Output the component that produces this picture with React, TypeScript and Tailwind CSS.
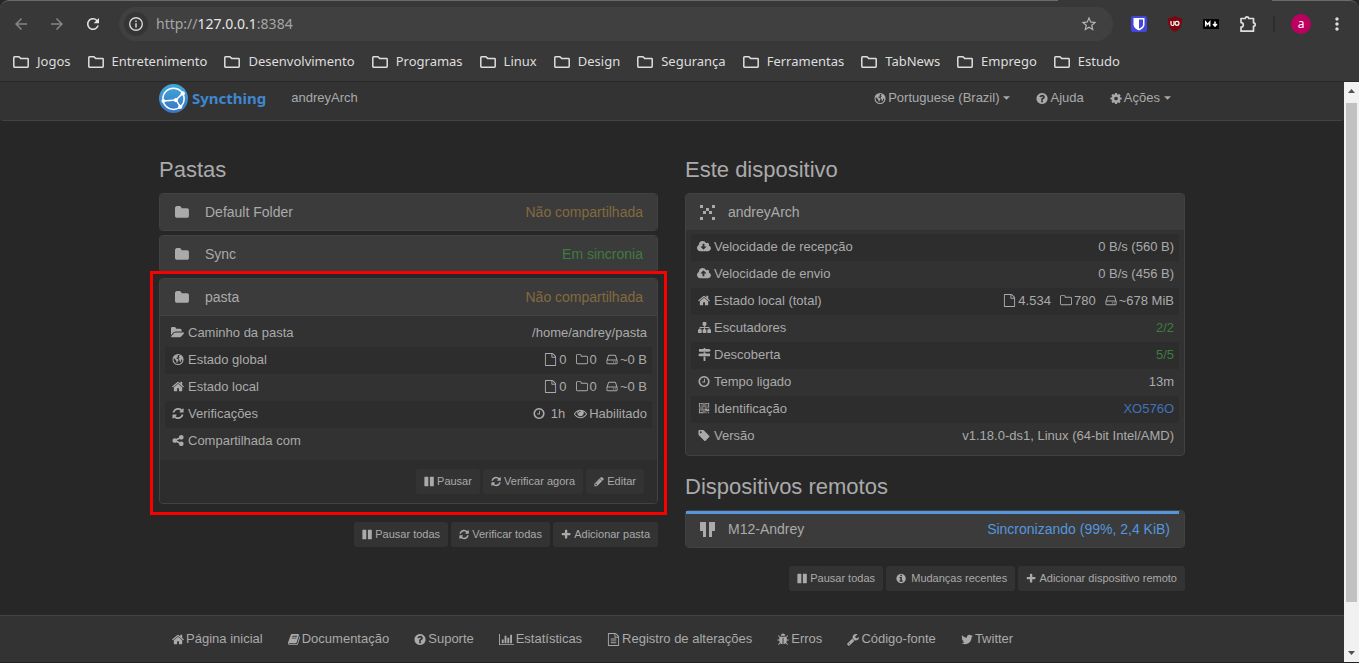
import React from "react";
import { MdArrowBack, MdArrowForward, MdRefresh, MdStarBorder, MdMoreVert } from "react-icons/md";

const DISC =
  "m384 0q0 209-103 385.5t-279.5 279.5-385.5 103-385.5-103-279.5-279.5-103-385.5 103-385.5 279.5-279.5 385.5-103 385.5 103 279.5 279.5 103 385.5z";
const CLOUD =
  "M1856 1152q0 159-112.500 271.500t-271.500 112.500h-1088q-185 0-316.500-131.500t-131.500-316.500q0-130 70-240t188-165q-2-30-2-43 0-212 150-362t362-150q156 0 285.500 87t188.500 231q71-62 166-62 106 0 181 75t75 181q0 76-41 138 130 31 213.500 135.500t83.500 238.500z";
const PAGE =
  "M1596 380q28 28 48 76t20 88v1152q0 40-28 68t-68 28h-1344q-40 0-68-28t-28-68v-1600q0-40 28-68t68-28h896q40 0 88 20t76 48zm-444-244v376h376q-10-29-22-41l-313-313q-12-12-41-22zm384 1528v-1024h-416q-40 0-68-28t-28-68v-416h-768v1536h1280z";

const paths = {
  home: "M1472 992v480q0 26-19 45t-45 19h-384v-384h-256v384h-384q-26 0-45-19t-19-45v-480q0-1 .5-3t.5-3l575-474 575 474q1 2 1 6zm223-69l-62 74q-8 9-21 11h-3q-13 0-21-7l-692-577-692 577q-12 8-24 7-13-2-21-11l-62-74q-8-10-7-23.5t11-21.5l719-599q32-26 76-26t76 26l244 204v-195q0-14 9-23t23-9h192q14 0 23 9t9 23v408l219 182q10 8 11 21.5t-7 23.5z",
  refresh:
    "M1639 1056q0 5-1 7-64 268-268 434.5t-478 166.5q-146 0-282.5-55t-243.5-157l-129 129q-19 19-45 19t-45-19-19-45v-448q0-26 19-45t45-19h448q26 0 45 19t19 45-19 45l-137 137q71 66 161 102t187 36q134 0 250-65t186-179q11-17 53-117 8-23 30-23h192q13 0 22.5 9.5t9.5 22.5zm25-800v448q0 26-19 45t-45 19h-448q-26 0-45-19t-19-45 19-45l138-138q-148-137-349-137-134 0-250 65t-186 179q-11 17-53 117-8 23-30 23h-199q-13 0-22.5-9.5t-9.5-22.5v-7q65-268 270-434.5t480-166.5q146 0 284 55.5t245 156.5l130-129q19-19 45-19t45 19 19 45z",
  folderOpen:
    "M1815 952q0 31-31 66l-336 396q-43 51-120.5 86.5t-143.5 35.5h-1088q-34 0-60.5-13t-26.5-43q0-31 31-66l336-396q43-51 120.5-86.5t143.5-35.5h1088q34 0 60.5 13t26.5 43zm-343-344v160h-832q-94 0-197 47.5t-164 119.5l-337 396-5 6q0-4-.5-12.5t-.5-12.5v-960q0-92 66-158t158-66h320q92 0 158 66t66 158v32h544q92 0 158 66t66 158z",
  folder:
    "M1728 608v704q0 92-66 158t-158 66h-1216q-92 0-158-66t-66-158v-960q0-92 66-158t158-66h320q92 0 158 66t66 158v32h672q92 0 158 66t66 158z",
  folderO:
    "M1600 1312v-704q0-40-28-68t-68-28h-704q-40 0-68-28t-28-68v-64q0-40-28-68t-68-28h-320q-40 0-68 28t-28 68v960q0 40 28 68t68 28h1216q40 0 68-28t28-68zm128-704v704q0 92-66 158t-158 66h-1216q-92 0-158-66t-66-158v-960q0-92 66-158t158-66h320q92 0 158 66t66 158v32h672q92 0 158 66t66 158z",
  fileO: PAGE,
  fileText:
    PAGE +
    "M512 800q0-14 9-23t23-9h704q14 0 23 9t9 23v64q0 14-9 23t-23 9h-704q-14 0-23-9t-9-23v-64zm736 224q14 0 23 9t9 23v64q0 14-9 23t-23 9h-704q-14 0-23-9t-9-23v-64q0-14 9-23t23-9h704zm0 256q14 0 23 9t9 23v64q0 14-9 23t-23 9h-704q-14 0-23-9t-9-23v-64q0-14 9-23t23-9h704z",
  clock:
    "M1024 544v448q0 14-9 23t-23 9h-320q-14 0-23-9t-9-23v-64q0-14 9-23t23-9h224v-352q0-14 9-23t23-9h64q14 0 23 9t9 23zm416 352q0-148-73-273t-198-198-273-73-273 73-198 198-73 273 73 273 198 198 273 73 273-73 198-198 73-273zm224 0q0 209-103 385.5t-279.5 279.5-385.5 103-385.5-103-279.5-279.5-103-385.5 103-385.5 279.5-279.5 385.5-103 385.5 103 279.5 279.5 103 385.5z",
  question:
    "M1024 1376v-192q0-14-9-23t-23-9h-192q-14 0-23 9t-9 23v192q0 14 9 23t23 9h192q14 0 23-9t9-23zm256-672q0-88-55.5-163t-138.5-116-170-41q-243 0-371 213-15 24 8 42l132 100q7 6 19 6 16 0 25-12 53-68 86-92 34-24 86-24 48 0 85.5 26t37.5 59q0 38-20 61t-68 45q-63 28-115.5 86.5t-52.5 125.5v36q0 14 9 23t23 9h192q14 0 23-9t9-23q0-19 21.5-49.5t54.5-49.5q32-18 49-28.5t46-35 44.5-48 28-60.5 12.5-81zm0 192" +
    DISC,
  info:
    "M1152 1376v-160q0-14-9-23t-23-9h-96v-512q0-14-9-23t-23-9h-320q-14 0-23 9t-9 23v160q0 14 9 23t23 9h96v320h-96q-14 0-23 9t-9 23v160q0 14 9 23t23 9h448q14 0 23-9t9-23zm-128-896v-160q0-14-9-23t-23-9h-192q-14 0-23 9t-9 23v160q0 14 9 23t23 9h192q14 0 23-9t9-23zm256 416" +
    DISC,
  plus: "M1600 736v192q0 40-28 68t-68 28h-416v416q0 40-28 68t-68 28h-192q-40 0-68-28t-28-68v-416h-416q-40 0-68-28t-28-68v-192q0-40 28-68t68-28h416v-416q0-40 28-68t68-28h192q40 0 68 28t28 68v416h416q40 0 68 28t28 68z",
  pause:
    "M1664 192v1408q0 26-19 45t-45 19h-512q-26 0-45-19t-19-45v-1408q0-26 19-45t45-19h512q26 0 45 19t19 45zm-896 0v1408q0 26-19 45t-45 19h-512q-26 0-45-19t-19-45v-1408q0-26 19-45t45-19h512q26 0 45 19t19 45z",
  pencil:
    "M491 1536l91-91-235-235-91 91v107h128v128h107zm523-928q0-22-22-22-10 0-17 7l-542 542q-7 7-7 17 0 22 22 22 10 0 17-7l542-542q7-7 7-17zm-54-192l416 416-832 832h-416v-416zm683 96q0 53-37 90l-166 166-416-416 166-165q36-38 90-38 53 0 91 38l235 234q37 39 37 91z",
  cog: "M1152 896q0-106-75-181t-181-75-181 75-75 181 75 181 181 75 181-75 75-181zm512-109v222q0 12-8 23t-20 13l-185 28q-19 54-39 91 35 50 107 138 10 12 10 25t-9 23q-27 37-99 108t-94 71q-12 0-26-9l-138-108q-44 23-91 38-16 136-29 186-7 28-36 28h-222q-14 0-24.5-8.5t-11.5-21.5l-28-184q-49-16-90-37l-141 107q-10 9-25 9-14 0-25-11-126-114-165-168-7-10-7-23 0-12 8-23 15-21 51-66.5t54-70.5q-27-50-41-99l-183-27q-13-2-21-12.5t-8-23.5v-222q0-12 8-23t19-13l186-28q14-46 39-92-40-57-107-138-10-12-10-24 0-10 9-23 26-36 98.5-107.5t94.5-71.5q13 0 26 10l138 107q44-23 91-38 16-136 29-186 7-28 36-28h222q14 0 24.5 8.5t11.5 21.5l28 184q49 16 90 37l142-107q9-9 24-9 13 0 25 10 129 119 165 170 7 8 7 22 0 12-8 23-15 21-51 66.500t-54 70.500q26 50 41 98l183 28q13 2 21 12.5t8 23.500z",
  tag: "M576 448q0-53-37.5-90.5t-90.5-37.5-90.5 37.5-37.5 90.5 37.5 90.5 90.5 37.5 90.5-37.5 37.5-90.5zm1067 576q0 53-37 90l-491 492q-39 37-91 37-53 0-90-37l-715-716q-38-37-64.5-101t-26.5-117v-416q0-52 38-90t90-38h416q53 0 117 26.5t102 64.5l715 714q37 39 37 91z",
  share:
    "M1344 1024q133 0 226.5 93.5t93.5 226.5-93.5 226.5-226.5 93.5-226.5-93.5-93.5-226.5q0-12 2-34l-360-180q-92 86-218 86-133 0-226.5-93.5t-93.5-226.5 93.5-226.5 226.5-93.5q126 0 218 86l360-180q-2-22-2-34 0-133 93.5-226.5t226.5-93.5 226.5 93.5 93.5 226.5-93.5 226.5-226.5 93.5q-126 0-218-86l-360 180q2 22 2 34t-2 34l360 180q92-86 218-86z",
  eye: "M1664 960q-152-236-381-353 61 104 61 225 0 185-131.5 316.5t-316.5 131.5-316.5-131.5-131.5-316.5q0-121 61-225-229 117-381 353 133 205 333.5 326.5t434.5 121.5 434.5-121.5 333.5-326.5zm-720-384q0-20-14-34t-34-14q-125 0-214.5 89.5t-89.5 214.5q0 20 14 34t34 14 34-14 14-34q0-86 61-147t147-61q20 0 34-14t14-34zm848 384q0 34-20 69-140 230-376.5 368.5t-499.5 138.5-499.5-139-376.5-368q-20-35-20-69t20-69q140-229 376.5-368t499.5-139 499.5 139 376.500 368q20 35 20 69z",
  hdd: "M1168 1216q0 33-23.5 56.5t-56.5 23.5-56.5-23.5-23.5-56.5 23.5-56.5 56.5-23.5 56.5 23.5 23.5 56.5zm256 0q0 33-23.5 56.5t-56.5 23.5-56.5-23.5-23.5-56.5 23.5-56.5 56.5-23.5 56.5 23.5 23.5 56.5zm112 160v-320q0-13-9.5-22.5t-22.5-9.5h-1216q-13 0-22.5 9.5t-9.5 22.5v320q0 13 9.5 22.5t22.5 9.5h1216q13 0 22.5-9.5t9.5-22.5zm-1230-480h1180l-157-482q-4-13-16-21.5t-26-8.5h-782q-14 0-26 8.5t-16 21.5zm1358 160v320q0 66-47 113t-113 47h-1216q-66 0-113-47t-47-113v-320q0-25 16-75l197-606q17-53 63-86t101-33h782q55 0 101 33t63 86l197 606q16 50 16 75z",
  sitemap:
    "M1792 1248v320q0 40-28 68t-68 28h-320q-40 0-68-28t-28-68v-320q0-40 28-68t68-28h96v-192h-512v192h96q40 0 68 28t28 68v320q0 40-28 68t-68 28h-320q-40 0-68-28t-28-68v-320q0-40 28-68t68-28h96v-192h-512v192h96q40 0 68 28t28 68v320q0 40-28 68t-68 28h-320q-40 0-68-28t-28-68v-320q0-40 28-68t68-28h96v-192q0-52 38-90t90-38h512v-192h-96q-40 0-68-28t-28-68v-320q0-40 28-68t68-28h320q40 0 68 28t28 68v320q0 40-28 68t-68 28h-96v192h512q52 0 90 38t38 90v192h96q40 0 68 28t28 68z",
  signs:
    "M1745 297q10 10 10 23t-10 23l-141 141q-28 28-68 28h-1344q-26 0-45-19t-19-45v-256q0-26 19-45t45-19h576v-64q0-26 19-45t45-19h128q26 0 45 19t19 45v64h512q40 0 68 28zm-977 919h256v512q0 26-19 45t-45 19h-128q-26 0-45-19t-19-45v-512zm832-448q26 0 45 19t19 45v256q0 26-19 45t-45 19h-1344q-40 0-68-28l-141-141q-10-10-10-23t10-23l141-141q28-28 68-28h512v-192h256v192h576z",
  download:
    CLOUD +
    "M1216 928q0-14-9-23t-23-9h-224v-352q0-13-9.5-22.5t-22.5-9.5h-192q-13 0-22.5 9.5t-9.5 22.5v352h-224q-13 0-22.5 9.5t-9.5 22.5q0 14 9 23l352 352q9 9 23 9t23-9l351-351q10-12 10-24z",
  upload:
    CLOUD +
    "M1216 864q0-14-9-23l-352-352q-9-9-23-9t-23 9l-351 351q-10 12-10 24 0 14 9 23t23 9h224v352q0 13 9.5 22.5t22.5 9.5h192q13 0 22.5-9.5t9.5-22.5v-352h224q13 0 22.5-9.5t9.5-22.5z",
  twitter:
    "M1684 408q-67 98-162 167 1 14 1 42 0 130-38 259.5t-115.5 248.5-184.5 210.5-258 146-323 54.5q-271 0-496-145 35 4 78 4 225 0 401-138-105-2-188-64.5t-114-159.5q33 5 61 5 43 0 85-11-112-23-185.5-111.5t-73.5-205.5v-4q68 38 146 41-66-44-105-115t-39-154q0-88 44-163 121 149 294.5 238.5t371.5 99.5q-8-38-8-74 0-134 94.5-228.5t228.5-94.5q140 0 236 102 109-21 205-78-37 115-142 178 93-10 186-50z",
  bug: "M1696 960q0 26-19 45t-45 19h-224q0 171-67 290l208 209q19 19 19 45t-19 45q-18 19-45 19t-45-19l-198-197q-5 5-15 13t-42 28.5-65 36.5-82 29-97 13v-896h-128v896q-51 0-101.5-13.5t-87-33-66-39-43.5-32.5l-15-14-183 207q-20 21-48 21-24 0-43-16-19-18-20.5-44.5t15.5-46.5l202-227q-58-114-58-274h-224q-26 0-45-19t-19-45 19-45 45-19h224v-294l-173-173q-19-19-19-45t19-45 45-19 45 19l173 173h844l173-173q19-19 45-19t45 19 19 45-19 45l-173 173v294h224q26 0 45 19t19 45zm-480-576h-640q0-133 93.5-226.5t226.5-93.5 226.5 93.5 93.5 226.5z",
  wrench:
    "M448 1472q0-26-19-45t-45-19-45 19-19 45 19 45 45 19 45-19 19-45zm644-420l-682 682q-37 37-90 37-52 0-91-37l-106-108q-38-36-38-90 0-53 38-91l681-681q39 98 114.5 173.5t173.5 114.5zm634-435q0 39-23 106-47 134-164.5 217.5t-258.5 83.5q-185 0-316.5-131.5t-131.5-316.5 131.5-316.5 316.5-131.5q58 0 121.5 16.5t107.5 46.5q16 11 16 28t-16 28l-293 169v224l193 107q5-3 79-48.5t135.5-81 70.5-35.5q15 0 23.5 10t8.5 25z",
  chart:
    "M640 896v512h-256v-512h256zm384-512v1024h-256v-1024h256zm1024 1152v128h-2048v-1536h128v1408h1920zm-640-896v768h-256v-768h256zm384-384v1152h-256v-1152h256z",
  book: "M1703 478q40 57 18 129l-275 906q-19 64-76.5 107.5t-122.5 43.5h-923q-77 0-148.5-53.5t-99.5-131.5q-24-67-2-127 0-4 3-27t4-37q1-8-3-21.5t-3-19.5q2-11 8-21t16.5-23.5 16.5-23.5q23-38 45-91.5t30-91.5q3-10 .5-30t-.5-28q3-11 17-28t17-23q21-36 42-92t25-90q1-9-2.5-32t.5-28q4-13 22-30.5t22-22.5q19-26 42.5-84.5t27.5-96.5q1-8-3-25.5t-2-26.5q2-8 9-18t18-23 17-21q8-12 16.5-30.5t15-35 16-36 19.5-32 26.5-23.5 36-11.5 47.5 5.5l-1 3q38-9 51-9h761q74 0 114 56t18 130l-274 906q-36 119-71.5 153.5t-128.5 34.5h-869q-27 0-38 15-11 16-1 43 24 70 144 70h923q29 0 56-15.5t35-41.5l300-987q7-22 5-57 38 15 59 43zm-1064 2q-4 13 2 22.5t20 9.5h608q13 0 25.5-9.5t16.5-22.5l21-64q4-13-2-22.5t-20-9.5h-608q-13 0-25.5 9.5t-16.5 22.5zm-83 256q-4 13 2 22.5t20 9.5h608q13 0 25.5-9.5t16.5-22.5l21-64q4-13-2-22.5t-20-9.5h-608q-13 0-25.5 9.5t-16.5 22.5z",
  qr: "M576 1152v128h-128v-128h128zm0-768v128h-128v-128h128zm768 0v128h-128v-128h128zm-1024 1023h384v-383h-384v383zm0-767h384v-384h-384v384zm768 0h384v-384h-384v384zm-256 256v640h-640v-640h640zm512 512v128h-128v-128h128zm256 0v128h-128v-128h128zm0-512v384h-384v-128h-128v384h-128v-640h384v128h128v-128h128zm-768-768v640h-640v-640h640zm768 0v640h-640v-640h640z",
  globe:
    "M420 420L760 230L900 330L810 480L900 560L800 640L690 620L640 740L760 800L900 850L960 1000L860 1160L770 1380L690 1300L660 1060L540 940L470 790L330 740L300 600zM1010 420L1180 300L1420 470L1560 720L1580 960L1480 1060L1400 880L1280 900L1330 1080L1240 1250L1120 1180L1110 980L980 900L990 720L1130 640L1030 560z",
};

type IconName = keyof typeof paths;

const boxes: Partial<Record<IconName, string>> = {
  download: "-64 0 1920 1792",
  upload: "-64 0 1920 1792",
  chart: "0 0 2048 1792",
  folderOpen: "0 0 1856 1792",
  sitemap: "0 0 1792 1792",
  eye: "0 0 1792 1792",
  signs: "0 0 1792 1792",
  fileText: "0 0 1792 1792",
  fileO: "0 0 1792 1792",
};

function Icon({ name, className = "h-[13px]" }: { name: IconName; className?: string }) {
  return (
    <svg viewBox={boxes[name] ?? "64 0 1664 1792"} className={"w-auto shrink-0 " + className} fill="currentColor" fillRule="evenodd" aria-hidden="true">
      {name === "globe" && <circle cx="896" cy="896" r="690" fill="none" stroke="currentColor" strokeWidth="150" />}
      <path d={paths[name]} />
    </svg>
  );
}

function BookmarkFolder() {
  return (
    <svg viewBox="0 0 16 12" className="h-3 w-4 shrink-0" fill="none" stroke="#dedede" strokeWidth="1.5" strokeLinejoin="round" aria-hidden="true">
      <path d="M.8 1.500Q.8.8 1.500.8H6L7.800 2.600H14.500Q15.200 2.600 15.200 3.300V10.500Q15.200 11.200 14.500 11.200H1.500Q.8 11.200.8 10.500Z" />
    </svg>
  );
}

const bookmarks = ["Jogos", "Entretenimento", "Desenvolvimento", "Programas", "Linux", "Design", "Segurança", "Ferramentas", "TabNews", "Emprego", "Estudo"];

function BrowserBar() {
  return (
    <header className="relative rounded-t-[9px] border-t border-[#6a6c6a] border-b border-b-[#272727] bg-[#383838] font-['Noto_Sans',sans-serif]">
      <div className="absolute -top-px right-[87px] h-px w-[214px] bg-[#383838]" />
      <div className="flex h-[46px] items-center pr-3 pl-3">
        <button aria-label="Voltar" className="mr-[18px] text-[#858585]"><MdArrowBack size={18} /></button>
        <button aria-label="Avançar" className="mr-[18px] text-[#858585]"><MdArrowForward size={18} /></button>
        <button aria-label="Recarregar" className="mr-[17px] text-[#e6e6e6]"><MdRefresh size={18} /></button>
        <div className="mr-[18px] flex h-[34px] flex-1 items-center rounded-full bg-[#404040] pr-[15px] pl-[5px]">
          <button aria-label="Informações do site" className="flex size-6 items-center justify-center rounded-full bg-[#353535]">
            <svg viewBox="0 0 16 16" className="size-4" fill="none" stroke="#d6d6d6" strokeWidth="1.400" aria-hidden="true">
              <circle cx="8" cy="8" r="6.300" />
              <path d="M8 7.200v4.300M8 4.400v1.500" strokeWidth="1.500" />
            </svg>
          </button>
          <div className="ml-2 flex-1 text-sm text-[#a6a6a6]">
            http://<span className="text-[#e6e6e6]">127.0.0.1</span>:8384
          </div>
          <button aria-label="Favoritar" className="text-[#b4b4b4]"><MdStarBorder size={18} /></button>
        </div>
        <div className="flex items-center">
          <button aria-label="Bitwarden" className="mr-5">
            <svg viewBox="0 0 16 16" className="size-4" aria-hidden="true">
              <rect width="16" height="16" rx="2" fill="#4246dc" />
              <path d="M2.500 2h11v6.500c0 3-2.700 4.700-5.500 6-2.800-1.300-5.500-3-5.500-6z" fill="#fff" />
              <path d="M8 3.600h4v5c0 1.900-1.800 3.100-4 4.200z" fill="#4246dc" />
            </svg>
          </button>
          <button aria-label="uBlock Origin" className="mr-5">
            <svg viewBox="0 0 16 16" className="size-4" aria-hidden="true">
              <path d="M8 0c2 1.500 4.500 2 7 2 0 7.500-1 10.500-7 14C2 12.500 1 9.500 1 2c2.500 0 5-.5 7-2z" fill="#7c0510" />
              <g fill="none" stroke="#fff" strokeWidth="1.200">
                <path d="M4 5v3a1.500 1.500 0 0 0 3 0V5" />
                <circle cx="10" cy="7.300" r="2" />
              </g>
            </svg>
          </button>
          <button aria-label="Markdown" className="mr-5">
            <svg viewBox="0 0 16 10" className="h-[10px] w-4" aria-hidden="true">
              <rect width="16" height="10" rx="1" fill="#000" />
              <path d="M2.700 7.500V3l2 2.400L6.700 3v4.500M12 2.500v4M10 5l2 2.200L14 5" fill="none" stroke="#fff" strokeWidth="1.500" />
            </svg>
          </button>
          <button aria-label="Extensões" className="mr-4">
            <svg viewBox="0 0 18 18" className="size-[18px]" fill="none" stroke="#dedede" strokeWidth="1.700" strokeLinejoin="round" aria-hidden="true">
              <path d="M2 3.500h4.300a1.700 1.700 0 0 1 3.400 0h4.800v4.300a1.700 1.700 0 0 1 0 3.400v5H2v-4a2.300 2.300 0 0 0 0-4.600z" />
            </svg>
          </button>
          <div className="mr-4 h-4 w-0.5 bg-[#2c2c2c]" />
          <button aria-label="Perfil" className="mr-4 flex size-5 items-center justify-center rounded-full bg-[#bd0060] text-xs text-white">a</button>
          <button aria-label="Menu" className="text-[#dedede]"><MdMoreVert size={20} /></button>
        </div>
      </div>
      <nav aria-label="Favoritos" className="flex h-[34px] items-center gap-[17px] pb-1 pl-[13px] text-[13px] text-[#dedede]">
        {bookmarks.map((b) => (
          <a key={b} href="#" className="flex items-center gap-2">
            <BookmarkFolder />
            {b}
          </a>
        ))}
      </nav>
    </header>
  );
}

function Logo() {
  return (
    <a href="#" className="flex items-center gap-1 text-[#3f87cf]">
      <svg viewBox="0 0 30 30" className="size-[29px]" aria-hidden="true">
        <defs>
          <linearGradient id="disc" x1="0" y1="0" x2="0" y2="1">
            <stop offset="0" stopColor="#3fa9dc" />
            <stop offset="1" stopColor="#3b73c0" />
          </linearGradient>
        </defs>
        <circle cx="15" cy="15" r="15" fill="url(#disc)" />
        <g fill="none" stroke="#fff" strokeWidth="1.500">
          <circle cx="15" cy="15.300" r="11" />
          <path d="M4.500 17.500L17.500 16.500L24.500 9.700M17.500 16.500L22 23.500" />
        </g>
        <g fill="#fff">
          <circle cx="4.500" cy="17.500" r="2" />
          <circle cx="17.500" cy="16.600" r="2.200" />
          <circle cx="24.600" cy="9.700" r="2.200" />
          <circle cx="22" cy="23.600" r="2.200" />
        </g>
      </svg>
      <span className="font-['Noto_Sans',sans-serif] text-[15px] leading-5 font-bold">Syncthing</span>
    </a>
  );
}

function Caret() {
  return (
    <svg viewBox="0 0 8 4" className="ml-0.5 h-1 w-[7px]" fill="currentColor" aria-hidden="true">
      <path d="M0 0h8L4 4z" />
    </svg>
  );
}

function Panel({ children }: { children: React.ReactNode }) {
  return <section className="overflow-hidden rounded-[4px] border border-[#424242] bg-[#323232]">{children}</section>;
}

function PanelHead({ icon, name, status, tone = "" }: { icon: React.ReactNode; name: string; status?: string; tone?: string }) {
  return (
    <button className="flex h-9 w-full items-center bg-[#3b3b3b] px-[14px] text-left text-[14px]">
      {icon}
      <span className="flex-1">{name}</span>
      <span className={tone}>{status}</span>
    </button>
  );
}

const folderIcon = (
  <span className="mr-[15px] flex w-4 justify-center">
    <Icon name="folder" className="h-[15px]" />
  </span>
);

function Identicon({ cells }: { cells: string[] }) {
  return (
    <svg viewBox="0 0 5 5" className="mr-[13px] size-[15px]" fill="currentColor" shapeRendering="crispEdges" aria-hidden="true">
      {cells.flatMap((row, y) => [...row].map((c, x) => (c === "#" ? <rect key={x + "-" + y} x={x} y={y} width="1" height="1" /> : null)))}
    </svg>
  );
}

type Row = { icon: IconName; label: string; value: React.ReactNode };

function InfoTable({ rows, stripe }: { rows: Row[]; stripe: string }) {
  return (
    <div className="px-[5px] pt-1 pb-[5px]">
      <table className="w-full border-collapse text-[13px]">
        <tbody>
          {rows.map((r) => (
            <tr key={r.label} className={"h-[27px] " + stripe}>
              <th className="pb-0.5 pl-[5px] text-left font-normal whitespace-nowrap">
                <span className="flex items-center gap-0.5">
                  <span className="flex w-4 justify-center"><Icon name={r.icon} /></span>
                  {r.label}
                </span>
              </th>
              <td className="pr-[5px] pb-0.5"><div className="flex justify-end">{r.value}</div></td>
            </tr>
          ))}
        </tbody>
      </table>
    </div>
  );
}

function Totals({ files, folders, size }: { files: string; folders: string; size: string }) {
  return (
    <span className="flex items-center gap-[9px]">
      <span className="flex items-center gap-0.5"><Icon name="fileO" />{files}</span>
      <span className="flex items-center gap-0.5"><Icon name="folderO" />{folders}</span>
      <span className="flex items-center gap-0.5"><Icon name="hdd" />{size}</span>
    </span>
  );
}

function Btn({ icon, children }: { icon: IconName; children: React.ReactNode }) {
  return (
    <button className="flex h-[25px] items-center gap-[3px] rounded-[3px] bg-[#333] px-2 text-[11px] whitespace-nowrap">
      <Icon name={icon} className={icon === "info" ? "mx-0.5 h-[11px]" : "h-[11px]"} />
      {children}
    </button>
  );
}

const folderRows: Row[] = [
  { icon: "folderOpen", label: "Caminho da pasta", value: "/home/andrey/pasta" },
  { icon: "globe", label: "Estado global", value: <Totals files="0" folders="0" size="~0 B" /> },
  { icon: "home", label: "Estado local", value: <Totals files="0" folders="0" size="~0 B" /> },
  {
    icon: "refresh",
    label: "Verificações",
    value: (
      <span className="flex items-center gap-[9px]">
        <span className="flex items-center gap-1.5"><Icon name="clock" />1h</span>
        <span className="flex items-center gap-0.5"><Icon name="eye" />Habilitado</span>
      </span>
    ),
  },
  { icon: "share", label: "Compartilhada com", value: "" },
];

const deviceRows: Row[] = [
  { icon: "download", label: "Velocidade de recepção", value: "0 B/s (560 B)" },
  { icon: "upload", label: "Velocidade de envio", value: "0 B/s (456 B)" },
  { icon: "home", label: "Estado local (total)", value: <Totals files="4.534" folders="780" size="~678 MiB" /> },
  { icon: "sitemap", label: "Escutadores", value: <span className="text-[#3f7c40]">2/2</span> },
  { icon: "signs", label: "Descoberta", value: <span className="text-[#3f7c40]">5/5</span> },
  { icon: "clock", label: "Tempo ligado", value: "13m" },
  { icon: "qr", label: "Identificação", value: <a href="#" className="text-[#4272b8]">XO576O</a> },
  { icon: "tag", label: "Versão", value: "v1.18.0-ds1, Linux (64-bit Intel/AMD)" },
];

const footerLinks: [IconName, string][] = [
  ["home", "Página inicial"],
  ["book", "Documentação"],
  ["question", "Suporte"],
  ["chart", "Estatísticas"],
  ["fileText", "Registro de alterações"],
  ["bug", "Erros"],
  ["wrench", "Código-fonte"],
  ["twitter", "Twitter"],
];

export default function App() {
  return (
    <div className="flex min-h-screen flex-col bg-[#272727] font-['Liberation_Sans',Arial,sans-serif] text-[#aaa]">
      <BrowserBar />
      <div className="flex flex-1 border-b border-[#222]">
        <div className="flex min-w-0 flex-1 flex-col">
          <div className="rounded-b-[4px] border-b border-[#424242] bg-[#333]">
            <div className="mx-auto flex h-[38px] w-full max-w-[1026px] items-center pr-[14px] pb-1.5 text-[13px]">
              <Logo />
              <span className="ml-[25px] flex-1">andreyArch</span>
              <nav className="flex items-center gap-[26px]">
                <button className="flex items-center gap-0.5"><Icon name="globe" />Portuguese (Brazil)<Caret /></button>
                <a href="#" className="flex items-center gap-0.5"><Icon name="question" />Ajuda</a>
                <button className="flex items-center gap-0.5"><Icon name="cog" />Ações<Caret /></button>
              </nav>
            </div>
          </div>

          <main className="mx-auto grid w-full max-w-[1026px] flex-1 grid-cols-[499fr_500fr] items-start gap-[27px] pt-[35px]">
            <div>
              <h3 className="mb-[9px] text-[22px] leading-7">Pastas</h3>
              <div className="flex flex-col gap-1">
                <Panel><PanelHead icon={folderIcon} name="Default Folder" status="Não compartilhada" tone="text-[#836a3f]" /></Panel>
                <Panel><PanelHead icon={folderIcon} name="Sync" status="Em sincronia" tone="text-[#3f7c40]" /></Panel>
                <div className="relative pt-px">
                  <Panel>
                    <PanelHead icon={folderIcon} name="pasta" status="Não compartilhada" tone="text-[#836a3f]" />
                    <div className="border-t border-[#424242]">
                      <InfoTable rows={folderRows} stripe="even:bg-[#2d2d2d]" />
                    </div>
                    <div className="flex justify-end gap-[3px] bg-[#2d2d2d] pt-[9px] pr-[13px] pb-[9px]">
                      <Btn icon="pause">Pausar</Btn>
                      <Btn icon="refresh">Verificar agora</Btn>
                      <Btn icon="pencil">Editar</Btn>
                    </div>
                  </Panel>
                  <div className="pointer-events-none absolute -inset-x-[9px] -top-[6px] -bottom-[11px] border-[3px] border-[#fb0000]" />
                </div>
              </div>
              <div className="mt-[18px] flex justify-end gap-[3px]">
                <Btn icon="pause">Pausar todas</Btn>
                <Btn icon="refresh">Verificar todas</Btn>
                <Btn icon="plus">Adicionar pasta</Btn>
              </div>
            </div>

            <div>
              <h3 className="mb-[9px] text-[22px] leading-7">Este dispositivo</h3>
              <Panel>
                <PanelHead icon={<Identicon cells={["#...#", "..#..", ".#.#.", ".....", "#...#"]} />} name="andreyArch" />
                <InfoTable rows={deviceRows} stripe="odd:bg-[#2d2d2d]" />
              </Panel>
              <h3 className="mt-[17px] mb-[9px] text-[22px] leading-7">Dispositivos remotos</h3>
              <div className="relative">
                <Panel>
                  <PanelHead icon={<Identicon cells={["##.##", "##.##", "##.##", ".#.#.", ".#.#."]} />} name="M12-Andrey" status="Sincronizando (99%, 2,4 KiB)" tone="text-[#5596de]" />
                </Panel>
                <div className="absolute top-px right-1.5 left-px h-[3px] bg-[#5596de]" />
              </div>
              <div className="mt-[18px] flex justify-end gap-[3px]">
                <Btn icon="pause">Pausar todas</Btn>
                <Btn icon="info">Mudanças recentes</Btn>
                <Btn icon="plus">Adicionar dispositivo remoto</Btn>
              </div>
            </div>
          </main>

          <footer className="border-t border-[#424242] bg-[#333]">
            <nav className="mx-auto flex h-[46px] w-full max-w-[1026px] items-center gap-[25px] px-[13px] text-[13px]">
              {footerLinks.map(([icon, label]) => (
                <a key={label} href="#" className="flex items-center gap-0.5 whitespace-nowrap">
                  <Icon name={icon} />
                  {label}
                </a>
              ))}
            </nav>
          </footer>
        </div>

        <div className="flex w-[15px] flex-col items-center bg-[#f1f1f1] text-[#505050]" aria-hidden="true">
          <div className="flex h-[21px] items-start pt-[7px]">
            <svg viewBox="0 0 7 4" className="h-1 w-[7px]" fill="currentColor"><path d="M0 4h7L3.500 0z" /></svg>
          </div>
          <div className="w-[11px] flex-1 bg-[#c1c1c1]" />
          <div className="flex h-[60px] items-end pb-[7px]">
            <svg viewBox="0 0 7 4" className="h-1 w-[7px]" fill="currentColor"><path d="M0 0h7L3.500 4z" /></svg>
          </div>
        </div>
      </div>
    </div>
  );
}
